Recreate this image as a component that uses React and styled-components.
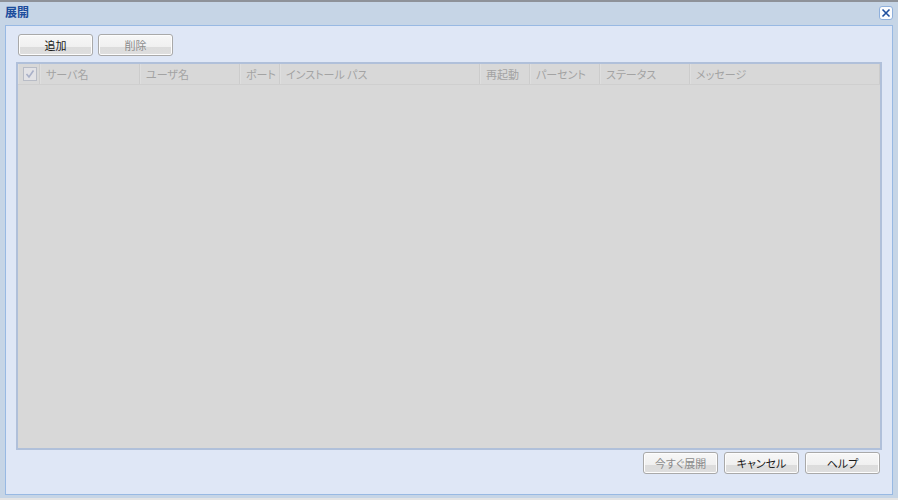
import React from 'react';
import styled, { createGlobalStyle } from 'styled-components';

const GlobalStyle = createGlobalStyle`
  html, body {
    margin: 0;
    padding: 0;
    background: #e4e4e4;
  }
  body {
    font-family: "Noto Sans CJK JP", "Liberation Sans", sans-serif;
    font-feature-settings: "palt";
  }
`;

const Window = styled.div`
  width: 898px;
  height: 498px;
  box-sizing: border-box;
  background: #c6d5e6;
  border-top: 2px solid #8e9299;
  display: flex;
  flex-direction: column;
  padding-bottom: 3px;
`;

const TitleBar = styled.div`
  height: 23px;
  display: flex;
  align-items: center;
  justify-content: space-between;
  padding: 0 5px 0 5px;
`;

const Title = styled.span`
  color: #1c4d9c;
  font-size: 12px;
  font-weight: bold;
  line-height: 14px;
  margin-top: -4px;
`;

const CloseButton = styled.button`
  width: 14px;
  height: 14px;
  padding: 0;
  margin-top: -2px;
  border: 1px solid #8fb0dc;
  border-radius: 3px;
  background: #fbfcfe;
  display: flex;
  align-items: center;
  justify-content: center;
`;

const Panel = styled.div`
  flex: 1;
  margin: 0 5px 0 5px;
  border: 1px solid #98b9e3;
  background: #dfe7f6;
  display: flex;
  flex-direction: column;
  padding: 8px 10px 20px 10px;
`;

const Toolbar = styled.div`
  display: flex;
  gap: 5px;
  padding-left: 2px;
  margin-bottom: 6px;
`;

const Button = styled.button`
  width: 75px;
  height: 22px;
  box-sizing: border-box;
  border: 1px solid #a9a9a9;
  border-radius: 3px;
  background: linear-gradient(#f7f7f7 0%, #f0f0f0 58%, #dcdcdc 58%, #dedede 100%);
  font-family: "Noto Sans CJK JP", sans-serif;
  font-feature-settings: "palt";
  font-size: 11px;
  line-height: 1;
  padding: 0;
  color: ${({ disabled }) => (disabled ? '#8c8c8c' : '#1a1a1a')};
  box-shadow: inset 0 0 0 1px #fdfdfd;
`;

const Grid = styled.div`
  flex: 1;
  border: 2px solid #b0c0da;
  background: #d8d8d8;
  display: flex;
  flex-direction: column;
`;

const HeaderRow = styled.div`
  display: flex;
  height: 20px;
  border-bottom: 1px solid #cfcfcf;
`;

const HeaderCell = styled.div`
  width: ${({ w }) => w}px;
  flex: ${({ grow }) => (grow ? 1 : 'none')};
  box-sizing: border-box;
  border-right: 1px solid #cccccc;
  border-left: 1px solid #dedede;
  display: flex;
  align-items: center;
  padding-left: 5px;
  font-size: 11px;
  color: #a3a3a3;
  white-space: nowrap;
`;

const CheckCell = styled(HeaderCell)`
  padding-left: 4px;
`;

const CheckBox = styled.div`
  width: 12px;
  height: 12px;
  border: 1px solid #b8bcc6;
  background: #e2e2e6;
  display: flex;
  align-items: center;
  justify-content: center;
`;

const Footer = styled.div`
  display: flex;
  justify-content: flex-end;
  gap: 6px;
  padding: 2px 2px 0 0;
`;

const columns = [
  { label: 'サーバ名', w: 100 },
  { label: 'ユーザ名', w: 100 },
  { label: 'ポート', w: 40 },
  { label: 'インストール パス', w: 200 },
  { label: '再起動', w: 50 },
  { label: 'パーセント', w: 70 },
  { label: 'ステータス', w: 90 },
  { label: 'メッセージ', grow: true },
];

const App = () => (
  <>
    <GlobalStyle />
    <Window>
      <TitleBar>
        <Title>展開</Title>
        <CloseButton>
          <svg width="10" height="10" viewBox="0 0 10 10">
            <path d="M1.5 1.5 L8.5 8.5 M8.5 1.5 L1.5 8.5" stroke="#1f4f9e" strokeWidth="1.6" />
          </svg>
        </CloseButton>
      </TitleBar>
      <Panel>
        <Toolbar>
          <Button>追加</Button>
          <Button disabled>削除</Button>
        </Toolbar>
        <Grid>
          <HeaderRow>
            <CheckCell w={22}>
              <CheckBox>
                <svg width="10" height="10" viewBox="0 0 10 10">
                  <path d="M1.5 5 L4 8 L8.5 1.5" stroke="#a9b0c8" strokeWidth="1.6" fill="none" />
                </svg>
              </CheckBox>
            </CheckCell>
            {columns.map((c) => (
              <HeaderCell key={c.label} w={c.w} grow={c.grow}>
                {c.label}
              </HeaderCell>
            ))}
          </HeaderRow>
        </Grid>
        <Footer>
          <Button disabled>今すぐ展開</Button>
          <Button>キャンセル</Button>
          <Button>ヘルプ</Button>
        </Footer>
      </Panel>
    </Window>
  </>
);

export default App;
